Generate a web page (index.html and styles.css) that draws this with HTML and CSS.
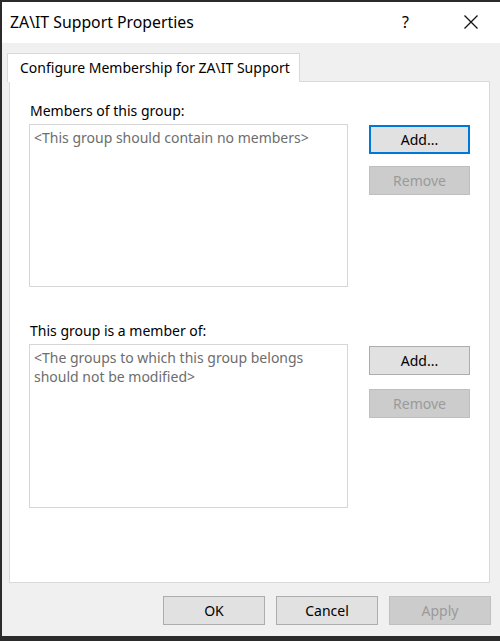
FILE: index.html
```html
<!DOCTYPE html>
<html>
<head>
<meta charset="utf-8">
<link rel="stylesheet" href="styles.css">
</head>
<body>
<div class="window">
  <div class="titlebar">
    <span class="title">ZA\IT Support Properties</span>
    <span class="help">?</span>
    <span class="close">
      <svg width="16" height="16" viewBox="0 0 16 16"><path d="M1.5 1.5 L14.5 14.5 M14.5 1.5 L1.5 14.5" stroke="#111" stroke-width="1.3" fill="none"/></svg>
    </span>
  </div>
  <div class="body">
    <div class="tabs">
      <div class="tab">Configure Membership for ZA\IT Support</div>
    </div>
    <div class="panel">
      <div class="section">
        <div class="label">Members of this group:</div>
        <div class="row">
          <div class="listbox">&lt;This group should contain no members&gt;</div>
          <div class="btns">
            <button class="btn default">Add...</button>
            <button class="btn disabled">Remove</button>
          </div>
        </div>
      </div>
      <div class="section second">
        <div class="label">This group is a member of:</div>
        <div class="row">
          <div class="listbox tall">&lt;The groups to which this group belongs should not be modified&gt;</div>
          <div class="btns wide-gap">
            <button class="btn">Add...</button>
            <button class="btn disabled">Remove</button>
          </div>
        </div>
      </div>
    </div>
    <div class="footer">
      <button class="btn fbtn">OK</button>
      <button class="btn fbtn">Cancel</button>
      <button class="btn fbtn disabled">Apply</button>
    </div>
  </div>
</div>
</body>
</html>
```
FILE: styles.css
```css
html, body {
  margin: 0;
  padding: 0;
}
body {
  background: #2b2b2b;
  width: 500px;
  height: 641px;
  overflow: hidden;
  font-family: "Noto Sans", "Open Sans", sans-serif;
  font-size: 14px;
  color: #000;
}
.window {
  margin: 2px 0 0 2px;
  width: 498px;
  height: 634px;
  background: #f0f0f0;
  display: flex;
  flex-direction: column;
}
.titlebar {
  height: 41px;
  background: #fff;
  display: flex;
  align-items: center;
  position: relative;
}
.title {
  margin-left: 8px;
  font-size: 15.8px;
  margin-top: -1px;
}
.help {
  position: absolute;
  left: 400px;
  top: 9px;
  font-size: 16px;
}
.close {
  position: absolute;
  left: 461px;
  top: 12px;
  width: 16px;
  height: 16px;
}
.close svg { display: block; }
.body {
  flex: 1;
  display: flex;
  flex-direction: column;
}
.tabs {
  padding: 10px 0 0 5px;
  display: flex;
  position: relative;
  z-index: 1;
  margin-bottom: -1px;
}
.tab {
  height: 29px;
  box-sizing: border-box;
  background: #fff;
  border: 1px solid #d9d9d9;
  border-bottom: none;
  padding: 0 8px 0 12px;
  line-height: 28px;
  width: 293px;
  white-space: nowrap;
}
.panel {
  margin-left: 7px;
  width: 481px;
  height: 502px;
  box-sizing: border-box;
  background: #fff;
  border: 1px solid #d9d9d9;
  padding: 19px 0 0 19px;
}
.label {
  height: 19px;
  line-height: 19px;
  margin-bottom: 4px;
  padding-left: 1px;
}
.second {
  margin-top: 34px;
}
.row {
  display: flex;
  align-items: flex-start;
}
.listbox {
  width: 319px;
  height: 163px;
  box-sizing: border-box;
  border: 1px solid #d6d6d6;
  color: #6d6d6d;
  padding: 3px 4px;
  line-height: 19px;
}
.listbox.tall {
  height: 164px;
}
.btns {
  margin-left: 21px;
  margin-top: 1px;
  display: flex;
  flex-direction: column;
  gap: 12px;
}
.btns.wide-gap {
  margin-top: 2px;
  gap: 14px;
}
.btn {
  width: 101px;
  height: 29px;
  box-sizing: border-box;
  background: #e1e1e1;
  border: 1px solid #adadad;
  font-family: "Noto Sans", "Open Sans", sans-serif;
  font-size: 14px;
  color: #000;
  padding: 0;
  margin: 0;
}
.btn.default {
  border: 2px solid #0078d7;
}
.btn.disabled {
  background: #cccccc;
  border-color: #bfbfbf;
  color: #9a9a9a;
}
.footer {
  display: flex;
  justify-content: flex-end;
  gap: 11px;
  padding: 13px 9px 0 0;
}
.fbtn {
  width: 102px;
}
```
